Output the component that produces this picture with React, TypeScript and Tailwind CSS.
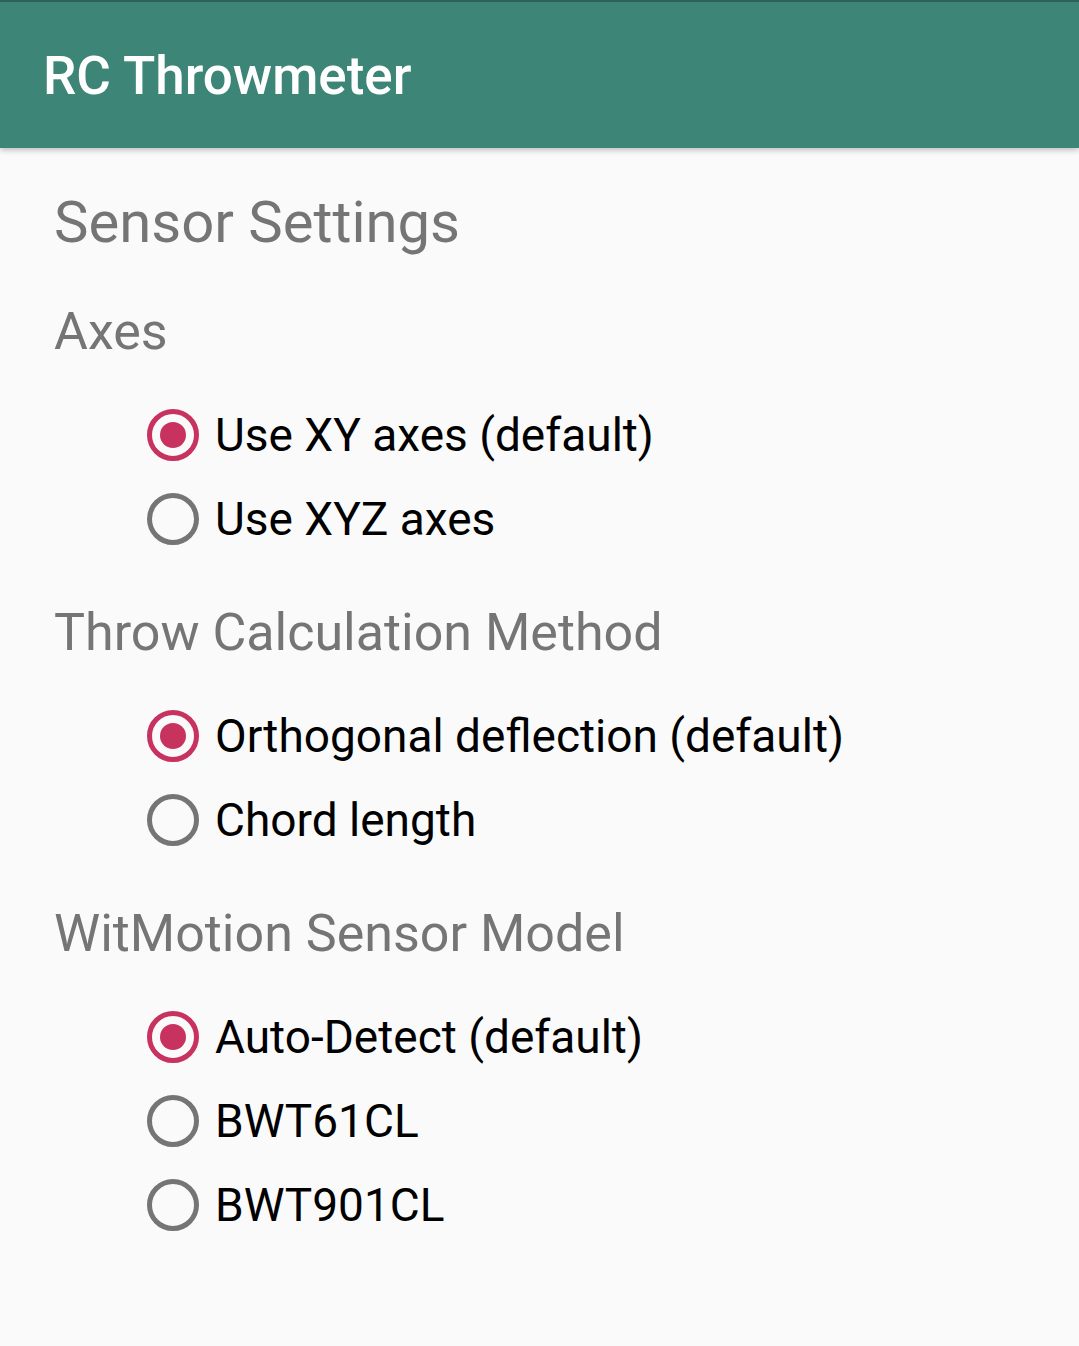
// RC Throwmeter — sensor settings screen

type Option = { label: string; checked?: boolean };

const SECTIONS: { title: string; options: Option[] }[] = [
  {
    title: "Axes",
    options: [{ label: "Use XY axes (default)", checked: true }, { label: "Use XYZ axes" }],
  },
  {
    title: "Throw Calculation Method",
    options: [{ label: "Orthogonal deflection (default)", checked: true }, { label: "Chord length" }],
  },
  {
    title: "WitMotion Sensor Model",
    options: [{ label: "Auto-Detect (default)", checked: true }, { label: "BWT61CL" }, { label: "BWT901CL" }],
  },
];

function Radio({ checked }: { checked?: boolean }) {
  if (checked) {
    return (
      <div className="w-[52px] h-[52px] rounded-full border-[5px] border-[#c8325f] flex items-center justify-center shrink-0">
        <div className="w-[26px] h-[26px] rounded-full bg-[#c8325f]" />
      </div>
    );
  }
  return <div className="w-[52px] h-[52px] rounded-full border-[5px] border-[#757575] shrink-0" />;
}

export default function App() {
  return (
    <div className="w-[1079px] h-[1346px] bg-[#fafafa] font-['Roboto',sans-serif] overflow-hidden">
      {/* App bar */}
      <div className="h-[148px] bg-[#3c8577] border-t-2 border-[#2b6358] flex items-center px-[43px] shadow-[0_2px_6px_rgba(0,0,0,0.25)] relative">
        <h1 className="text-[53px] leading-none font-medium text-white mt-[3px]">RC Throwmeter</h1>
      </div>

      <div className="pt-[32px] pl-[54px]">
        <h2 className="text-[58px] leading-[84px] text-[#757575]">Sensor Settings</h2>

        {SECTIONS.map((s, i) => (
          <div key={s.title} className={i === 0 ? "mt-[26px]" : "mt-[30px]"}>
            <div className="text-[52px] leading-[84px] text-[#757575]">{s.title}</div>
            <div className="mt-[19px] pl-[93px]">
              {s.options.map((o) => (
                <div key={o.label} className="h-[84px] flex items-center gap-[16px]">
                  <Radio checked={o.checked} />
                  <span className="text-[46px] leading-[84px] text-black">{o.label}</span>
                </div>
              ))}
            </div>
          </div>
        ))}
      </div>
    </div>
  );
}
